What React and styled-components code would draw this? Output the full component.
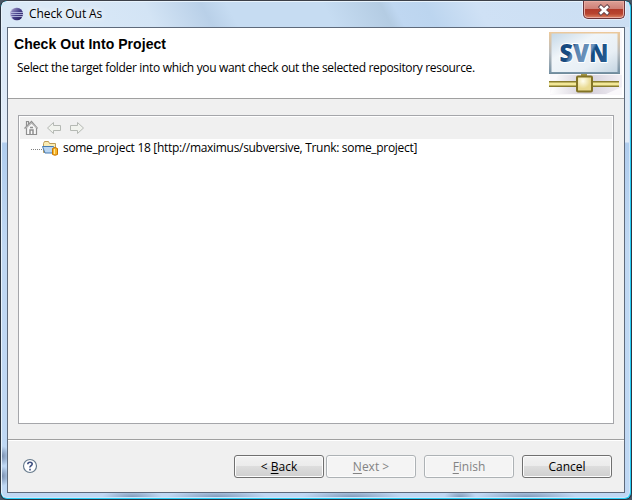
import React from 'react';
import styled, { createGlobalStyle } from 'styled-components';

const Global = createGlobalStyle`
  *{box-sizing:border-box}
  body{margin:0;overflow:hidden;background:#4a5766}
`;
const ui = `font-family:"Open Sans","Noto Sans",sans-serif;font-size:12px;line-height:16px;color:#000;white-space:pre;`;

const Window = styled.div`
  width:632px;height:500px;display:flex;flex-direction:column;
  border-radius:7px;overflow:hidden;background:#28cdf5;
  border:1px solid #2b3440;border-top-color:#3c4049;padding:0 1px 1px 0;
`;
const Glass = styled.div`
  flex:1;display:flex;flex-direction:column;padding:0 4px 4px 5px;
  border:1px solid #e8f3fc;border-right-color:#cfe6fa;border-bottom-color:#cfe6fa;border-radius:6px;
  background:
    radial-gradient(ellipse 30px 7px at 130px 100%,rgba(110,135,168,.75),transparent),
    radial-gradient(ellipse 50px 7px at 215px 100%,rgba(110,135,168,.75),transparent),
    radial-gradient(ellipse 50px 7px at 350px 100%,rgba(110,135,168,.75),transparent),
    radial-gradient(ellipse 16px 7px at 458px 100%,rgba(110,135,168,.75),transparent),
    radial-gradient(ellipse 50px 7px at 525px 100%,rgba(110,135,168,.75),transparent),
    radial-gradient(ellipse 8px 10px at 0 454px,rgba(90,110,145,.7),transparent),
    radial-gradient(ellipse 8px 10px at 0 474px,rgba(90,110,145,.7),transparent),
    linear-gradient(#d5e5f6 0,#e2ecf8 28.2%,#b0cdee 28.6%,#c0d8f3 50%,#bfd8f4 100%);
`;
const TitleBar = styled.header`
  height:25px;margin:0 -4px 0 -5px;display:flex;align-items:flex-start;padding:4px 4px 0 7px;gap:4px;
  background:linear-gradient(62deg,#dae9f7 0 10%,#d3e4f5 24%,#b9d0e8 33%,#c6dcf2 37%,#c6dcf2 52%,#b4cce3 61%,#bfd7f1 63%,#bcd5ef 68%,#cfe1f5 76%,#cbdef2 100%);
`;
const Title = styled.h1`
  ${ui} margin:0;font-weight:400;flex:1;letter-spacing:-.08px;
  text-shadow:0 0 6px #fff,0 0 8px #fff;
`;
const Close = styled.button`
  width:42px;height:18px;margin-top:-5px;padding:0;border:1px solid #6b3338;border-top:0;border-radius:0 0 5px 5px;
  display:flex;justify-content:center;align-items:center;
  box-shadow:inset 0 0 0 1px #e9aaa0,0 0 0 1px #e4eefa;
  background:linear-gradient(#dda097,#cf8077 45%,#b13a2a 50%,#b8442f 75%,#dc8664);
  svg{flex:none}
`;
const Client = styled.main`
  flex:1;display:flex;flex-direction:column;border:1px solid #5e6a7b;background:#f0f0f0;
`;
const Banner = styled.section`
  height:71px;background:#fff;border-bottom:1px solid #a0a0a0;display:flex;justify-content:space-between;padding:2px 1px 0 6px;
`;
const Copy = styled.div`padding-top:6px;`;
const Heading = styled.h2`
  margin:0;font:700 14px/16px "Liberation Sans",Arial,sans-serif;letter-spacing:.05px;white-space:pre;
`;
const Text = styled.p`${ui} margin:0;`;
const Message = styled(Text)`margin:8px 0 0 3px;letter-spacing:-.33px;`;
const Panel = styled.section`
  margin:16px 10px 0;height:309px;border:1px solid #a5a6aa;background:#fff;padding:1px;
`;
const Tools = styled.div`height:22px;background:#f0f0f0;padding:3px 0 0 3px;display:flex;gap:7px;`;
const TreeRow = styled.div`height:18px;display:flex;align-items:center;padding-left:11px;`;
const Dots = styled.span`width:11px;border-top:1px dotted #808080;margin-top:2px;`;
const Label = styled(Text)`margin-left:5px;letter-spacing:-.31px;`;
const Footer = styled.footer`
  margin-top:15px;border-top:1px solid #a0a0a0;box-shadow:inset 0 1px #fff;flex:1;
  display:flex;align-items:flex-start;padding:15px 12px 0 14px;
`;
const Help = styled.div`margin:3px auto 0 0;height:16px;`;
const Button = styled.button`
  ${ui} width:90px;height:23px;padding:0;border-radius:3px;margin-left:${p => p.$gap || 0}px;
  border:1px solid ${p => (p.disabled ? '#adb2b5' : '#707070')};
  color:${p => (p.disabled ? '#838383' : '#000')};
  background:${p => (p.disabled ? '#f4f4f4' : 'linear-gradient(#f2f2f2,#ebebeb 49%,#dddddd 50%,#cfcfcf)')};
  box-shadow:inset 0 0 0 1px #fcfcfc;
  u{text-underline-offset:2px;text-decoration-thickness:1px}
`;

const Eclipse = () => (
  <svg width="16" height="16" viewBox="0 0 16 16">
    <defs><linearGradient id="ec" x2="1" y2="1"><stop stopColor="#a9a3cf" /><stop offset=".5" stopColor="#453e88" /><stop offset="1" stopColor="#241a59" /></linearGradient></defs>
    <ellipse cx="7" cy="8" rx="6" ry="6.3" fill="#b9b2d8" />
    <ellipse cx="8" cy="8" rx="6" ry="6.300" fill="url(#ec)" />
    <path d="M2 6.500h12M1.500 8.500h13M2 10.500h12" stroke="#c3c8ea" strokeWidth=".8" />
  </svg>
);
const CloseMark = () => (
  <svg width="14" height="12" viewBox="0 0 14 12">
    <path d="M2.300 1.500L11.700 10.500M11.700 1.500L2.300 10.500" stroke="#65454c" strokeWidth="4.400" />
    <path d="M3 2.200L11 9.800M11 2.200L3 9.800" stroke="#fff" strokeWidth="2.600" />
  </svg>
);
const SvnLogo = () => (
  <svg width="75" height="66" viewBox="0 0 75 66">
    <defs>
      <linearGradient id="bd" x2="0" y2="1"><stop stopColor="#edc99b" /><stop offset=".5" stopColor="#b9bdc0" /><stop offset="1" stopColor="#7490a4" /></linearGradient>
      <linearGradient id="bg" x2="1" y2="1"><stop stopColor="#c5d8e8" /><stop offset=".35" stopColor="#f0f5f9" /><stop offset=".7" stopColor="#e8eff5" /><stop offset="1" stopColor="#c5d5e2" /></linearGradient>
      <linearGradient id="tx" gradientUnits="userSpaceOnUse" x1="12" y1="14" x2="56" y2="36"><stop stopColor="#174a80" /><stop offset=".25" stopColor="#174a80" /><stop offset=".3" stopColor="#547fad" /><stop offset=".62" stopColor="#6c95be" /><stop offset=".68" stopColor="#174a80" /><stop offset="1" stopColor="#265c92" /></linearGradient>
      <linearGradient id="sh"><stop stopColor="#fff" /><stop offset=".5" stopColor="#d3ced9" /><stop offset="1" stopColor="#f2eff5" /></linearGradient>
      <radialGradient id="kn" cx=".4" cy=".3"><stop stopColor="#fffef0" /><stop offset="1" stopColor="#e9da91" /></radialGradient>
    </defs>
    <path d="M2 0h72v65H2z" fill="#faf8fb" />
    <path d="M10 45h64v12L58 64H2z" fill="url(#sh)" />
    <path d="M1 2h71v42H1z" fill="url(#bd)" />
    <path d="M3.500 3.500h66V42h-66z" fill="url(#bg)" />
    <path d="M1 43.500h71" stroke="#718b9b" />
    <text x="11.500" y="32" fontFamily="Open Sans" fontWeight="800" fontSize="25" textLength="49" lengthAdjust="spacingAndGlyphs" fill="url(#tx)" stroke="#fff" strokeWidth="2" paintOrder="stroke">SVN</text>
    <path d="M1 51h70v6H1z" fill="#897d2d" /><path d="M1 52.500h70v3H1z" fill="#f3e898" />
    <path d="M33 44h6v3h-6z" fill="#a69745" />
    <rect x="29" y="46.500" width="15" height="15" rx="1" fill="url(#kn)" stroke="#827325" strokeWidth="2" />
  </svg>
);
const Home = () => (
  <svg width="16" height="16" viewBox="0 0 16 16" fill="none" stroke="#8f8f8f" strokeWidth="1.200">
    <path d="M3.500 7.500v7h10v-7M1.500 8.500l7-7 6 7M3.500 6V1.500h2v2.500" fill="#f8f8f8" />
    <path d="M3 8L8.500 3L14 8" stroke="#b5b5b5" />
    <path d="M7 14V10h3v4M7 7.500h3" strokeWidth="1.500" />
  </svg>
);
const Arrow = ({ flip }) => (
  <svg width="16" height="16" viewBox="0 0 16 16">
    <path transform={flip ? 'translate(16 0) scale(-1 1)' : undefined} d="M1.500 8L7.500 2.500V5.500H14.500V10.500H7.500V13.500Z" fill="#f1f3ee" stroke="#b5b9b4" strokeLinejoin="round" />
  </svg>
);
const Folder = () => (
  <svg width="16" height="16" viewBox="0 0 16 16">
    <path d="M1.500 12.500v-9l1-2h4l1 2h6v9z" fill="#fbedb5" stroke="#bd9b57" />
    <path d="M.5 6.500h11l3 6.500H3z" fill="#b9d5f1" stroke="#477bb2" />
    <path d="M10.500 8.500q2.500-2 5 0v6q-2.500 1.500-5 0z" fill="#f6b52b" stroke="#c87600" />
    <path d="M12.500 9v5" stroke="#ffe79a" />
  </svg>
);
const HelpIcon = () => (
  <svg width="16" height="16" viewBox="0 0 16 16" fill="none">
    <circle cx="8" cy="8" r="6.500" fill="#fff" stroke="#667a8c" strokeWidth="1.200" />
    <path d="M5.800 6.200q0-2 2.200-2t2.200 1.800q0 1-1.200 1.700T8 9.500M8 10.700v1.700" stroke="#3e4f80" strokeWidth="1.600" />
  </svg>
);

export default function App() {
  return (
    <>
      <Global />
      <Window>
        <Glass>
          <TitleBar><Eclipse /><Title>Check Out As</Title><Close aria-label="Close"><CloseMark /></Close></TitleBar>
          <Client>
            <Banner>
              <Copy>
                <Heading>Check Out Into Project</Heading>
                <Message>Select the target folder into which you want check out the selected repository resource.</Message>
              </Copy>
              <SvnLogo />
            </Banner>
            <Panel>
              <Tools><Home /><Arrow /><Arrow flip /></Tools>
              <TreeRow><Dots /><Folder /><Label>some_project 18 [http://maximus/subversive, Trunk: some_project]</Label></TreeRow>
            </Panel>
            <Footer>
              <Help><HelpIcon /></Help>
              <Button>&lt; <u>B</u>ack</Button>
              <Button disabled $gap={2}><u>N</u>ext &gt;</Button>
              <Button disabled $gap={8}><u>F</u>inish</Button>
              <Button $gap={8}>Cancel</Button>
            </Footer>
          </Client>
        </Glass>
      </Window>
    </>
  );
}
